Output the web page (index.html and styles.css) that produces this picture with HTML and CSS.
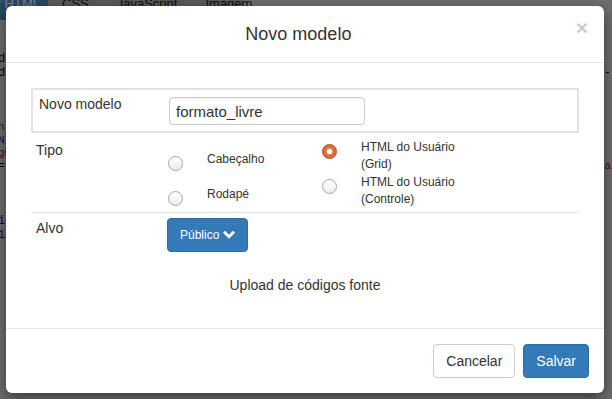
FILE: index.html
```html
<!DOCTYPE html>
<html lang="pt-BR">
<head>
  <meta charset="UTF-8">
  <meta name="viewport" content="width=device-width, initial-scale=1.0">
  <title>Novo modelo</title>
  <link rel="stylesheet" href="styles.css">
</head>
<body>
  <div class="page">
    <div class="tabs">
      <span class="tab tab-on">Editor HTML</span>
      <span class="tab">CSS</span>
      <span class="tab">JavaScript</span>
      <span class="tab">Imagem</span>
    </div>
    <div class="code">
      <div class="block block1">
        <div class="ln"><span>d:</span><span></span></div>
        <div class="ln"><span>d:</span><span>-</span></div>
      </div>
      <div class="block block2">
        <div class="ln"><span class="red">n:</span><span></span></div>
        <div class="ln"><span class="blue">N_</span><span></span></div>
        <div class="ln"><span class="red">gh</span><span></span></div>
        <div class="ln"><span>="</span><span class="red">a</span></div>
      </div>
      <div class="block block3">
        <div class="ln"><span class="blue">ic</span><span></span></div>
        <div class="ln"><span class="blue">ic</span><span></span></div>
      </div>
    </div>
  </div>
  <div class="backdrop"></div>

  <div class="modal">
    <div class="modal-header">
      <h4 class="modal-title">Novo modelo</h4>
      <button class="close">&times;</button>
    </div>
    <div class="modal-body">
      <div class="row-box">
        <label class="lbl lbl-box">Novo modelo</label>
        <input class="input" type="text" value="formato_livre">
      </div>
      <div class="row-tipo">
        <span class="lbl lbl-tipo">Tipo</span>
        <div class="radios">
          <div class="radio-col col-1">
            <div class="opt"><span class="radio"></span><span class="opt-text">Cabeçalho</span></div>
            <div class="opt"><span class="radio"></span><span class="opt-text">Rodapé</span></div>
          </div>
          <div class="radio-col">
            <div class="opt"><span class="radio radio-on"></span><span class="opt-text">HTML do Usuário<br>(Grid)</span></div>
            <div class="opt"><span class="radio"></span><span class="opt-text">HTML do Usuário<br>(Controle)</span></div>
          </div>
        </div>
      </div>
      <div class="row-alvo">
        <span class="lbl lbl-alvo">Alvo</span>
        <button class="btn btn-primary btn-small">Público
          <svg class="chev" width="12" height="10" viewBox="0 0 12 10"><polygon points="0,2.8 2,0.8 6,4.8 10,0.8 12,2.8 6,8.8" fill="#fff"/></svg>
        </button>
      </div>
      <div class="upload">Upload de códigos fonte</div>
    </div>
    <div class="modal-footer">
      <button class="btn btn-default">Cancelar</button>
      <button class="btn btn-primary">Salvar</button>
    </div>
  </div>
</body>
</html>
```

FILE: styles.css
```css
body {
  margin: 0;
  width: 612px;
  height: 399px;
  overflow: hidden;
  position: relative;
  font-family: "Liberation Sans", Arial, sans-serif;
}
.page {
  background: #dcdcdc;
  height: 399px;
}
.tabs {
  display: flex;
  width: 243px;
  height: 20px;
  background: #b4b4b4;
  border-bottom: 1px solid #ececec;
  font-size: 13px;
  color: #222;
}
.tab {
  line-height: 12px;
  margin-top: -7px;
  padding: 5px 14px 0;
}
.tab-on {
  background: #5590d0;
  color: #fff;
  flex-shrink: 0;
  box-sizing: border-box;
  width: 100px;
  margin-left: -52px;
  padding: 5px 8px 0 0;
  text-align: right;
}
.code {
  font-family: "Liberation Mono", monospace;
  font-size: 12px;
  color: #111;
}
.block1 {
  margin-top: 31px;
  line-height: 14px;
}
.block2 {
  margin-top: 41px;
  font-size: 11px;
  line-height: 13px;
}
.block3 {
  margin-top: 41px;
  line-height: 14px;
}
.ln {
  display: flex;
  justify-content: space-between;
  margin-left: -2px;
  padding-right: 1px;
}
.red { color: #a31515; }
.blue { color: #1a1aa6; }

.backdrop {
  position: absolute;
  inset: 0;
  background: rgba(0, 0, 0, 0.5);
}

.modal {
  position: absolute;
  left: 6px;
  top: 6px;
  width: 598px;
  background: #fff;
  border-radius: 6px;
  box-shadow: 0 5px 15px rgba(0, 0, 0, 0.5);
  color: #333;
}
.modal-header {
  display: flex;
  align-items: flex-start;
  padding: 15px;
  border-bottom: 1px solid #e5e5e5;
}
.modal-title {
  flex: 1;
  margin: 0;
  text-align: center;
  font-size: 18px;
  font-weight: normal;
  line-height: 26px;
}
.close {
  background: none;
  border: 0;
  padding: 0;
  margin-top: -4px;
  margin-right: 1px;
  font-family: "Liberation Sans", Arial, sans-serif;
  font-size: 21px;
  font-weight: bold;
  line-height: 21px;
  color: #000;
  opacity: 0.2;
}
.modal-body {
  padding: 25px 25px 33px;
}
.lbl {
  flex-shrink: 0;
  font-size: 14px;
  line-height: 20px;
}
.row-box {
  display: flex;
  align-items: flex-start;
  border: 2px solid #e3e3e3;
  padding: 4px 6px 6px;
}
.lbl-box {
  width: 130px;
}
.input {
  margin-top: 3px;
  width: 196px;
  height: 28px;
  box-sizing: border-box;
  padding: 0 6px;
  border: 1px solid #ccc;
  border-radius: 4px;
  box-shadow: inset 0 1px 1px rgba(0, 0, 0, 0.075);
  font-family: "Liberation Sans", Arial, sans-serif;
  font-size: 15px;
  color: #333;
}
.row-tipo {
  display: flex;
  align-items: flex-start;
  padding: 6px 0 3px 5px;
  border-bottom: 1px solid #ddd;
}
.lbl-tipo {
  width: 132px;
  padding-top: 1px;
}
.radios {
  display: flex;
}
.radio-col {
  width: 154px;
}
.col-1 {
  padding-top: 12px;
}
.opt {
  display: flex;
  align-items: flex-start;
  min-height: 35px;
}
.col-1 .opt + .opt {
  min-height: 17px;
}
.radio {
  flex-shrink: 0;
  width: 15px;
  height: 15px;
  box-sizing: border-box;
  border-radius: 50%;
  margin-top: 5px;
  margin-right: 24px;
  border: 1px solid #a6a6a6;
  background: linear-gradient(#fff, #ececec);
}
.radio-on {
  border-color: #b44c1c;
  background: radial-gradient(circle, #fff 0 2.4px, #e8773f 3.2px, #d6602a 7px);
}
.opt-text {
  font-size: 12px;
  line-height: 17px;
}
.row-alvo {
  display: flex;
  align-items: flex-start;
  padding: 5px 0 0 5px;
}
.lbl-alvo {
  width: 131px;
}
.btn {
  height: 34px;
  box-sizing: border-box;
  padding: 6px 12px;
  border: 1px solid #ccc;
  border-radius: 4px;
  font-family: "Liberation Sans", Arial, sans-serif;
  font-size: 14px;
  line-height: 20px;
  background: #fff;
  color: #333;
}
.btn-primary {
  background: #337ab7;
  border-color: #2e6da4;
  color: #fff;
}
.btn-small {
  display: inline-flex;
  align-items: center;
  gap: 4px;
  font-size: 12px;
}
.upload {
  margin-top: 23px;
  text-align: center;
  font-size: 14px;
  line-height: 20px;
}
.modal-footer {
  display: flex;
  justify-content: flex-end;
  gap: 8px;
  padding: 15px;
  border-top: 1px solid #e5e5e5;
}
```
